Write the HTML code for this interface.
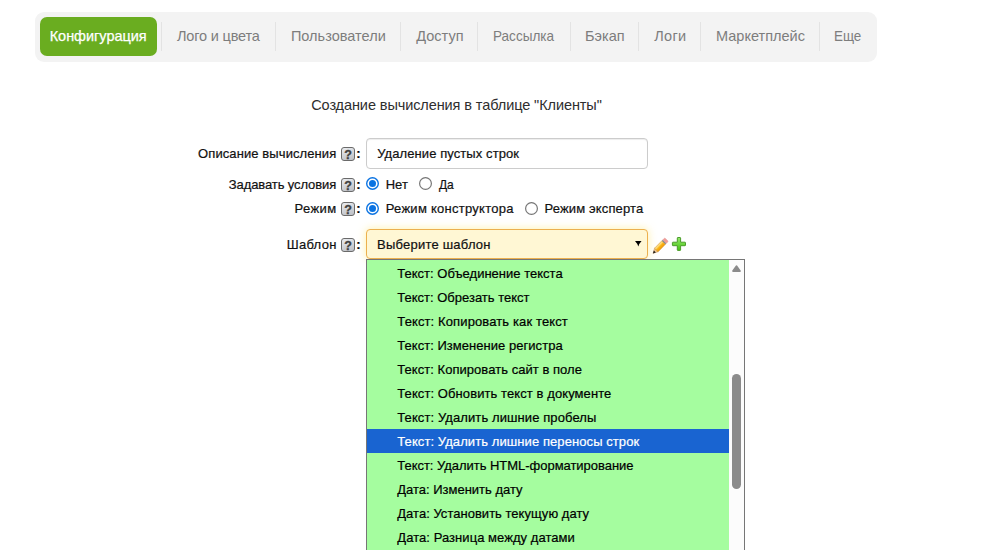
<!DOCTYPE html>
<html lang="ru">
<head>
<meta charset="utf-8">
<title>Создание вычисления в таблице "Клиенты"</title>
<style>
html,body{margin:0;padding:0;background:#fff;}
body{width:997px;height:550px;overflow:hidden;position:relative;font-family:"Liberation Sans","DejaVu Sans",sans-serif;color:#222;}
.t{position:absolute;white-space:nowrap;font-size:14.5px;line-height:20px;height:20px;-webkit-text-stroke:0.2px currentColor;}
#nav{position:absolute;left:35px;top:12px;width:842px;height:50px;background:#f3f3f3;border-radius:9px;}
#act{position:absolute;left:40px;top:17px;width:117px;height:39px;background:#6aad20;border-radius:7px;}
.sep{position:absolute;top:22px;width:1px;height:29px;background:#e3e3e3;}
.q{position:absolute;left:341px;width:12px;height:12px;border:1px solid #6a6a6a;border-radius:3px;background:linear-gradient(160deg,#ebedf0,#cfd2d7 55%,#bcbfc5);font:bold 12.5px/14.4px "Liberation Sans",sans-serif;color:#404040;-webkit-text-stroke:0.3px #404040;text-align:center;overflow:visible;}
#inp{position:absolute;left:366px;top:138px;width:280px;height:29px;border:1px solid #ccc;border-radius:4px;background:#fff;box-shadow:inset 0 1px 1px rgba(0,0,0,.075);}
#sel{position:absolute;left:366px;top:229px;width:280px;height:28px;border:1px solid #ecb04e;border-radius:4px;background:#fff7d4;box-shadow:0 0 8px rgba(255,232,120,.65);}
#dd{position:absolute;left:366px;top:259px;width:377px;height:300px;border:1px solid #767676;background:#fcfcfc;}
#ddg{position:absolute;left:367px;top:260px;width:362px;height:290px;background:#a5fd9f;}
#hl{position:absolute;left:367px;top:429px;width:362px;height:24px;background:#1964d1;}
#thumb{position:absolute;left:732px;top:374px;width:9px;height:115px;border-radius:5px;background:#8b8b8b;}
svg{position:absolute;overflow:visible;}
</style>
</head>
<body>
<div id="nav"></div>
<div id="act"></div>
<div class="sep" style="left:161px"></div>
<div class="sep" style="left:275px"></div>
<div class="sep" style="left:400px"></div>
<div class="sep" style="left:477px"></div>
<div class="sep" style="left:570px"></div>
<div class="sep" style="left:638px"></div>
<div class="sep" style="left:700px"></div>
<div class="sep" style="left:819px"></div>
<div class="q" style="top:147px">?</div>
<div class="q" style="top:178px">?</div>
<div class="q" style="top:202px">?</div>
<div class="q" style="top:238px">?</div>
<div id="inp"></div>
<div id="sel"></div>
<div id="dd"></div>
<div id="ddg"></div>
<div id="hl"></div>
<div id="thumb"></div>
<svg style="left:366px;top:177px" width="13" height="13" viewBox="0 0 13 13"><circle cx="6.5" cy="6.5" r="5.8" fill="#fff" stroke="#0a73e2" stroke-width="1.4"/><circle cx="6.5" cy="6.5" r="3.5" fill="#0a73e2"/></svg>
<svg style="left:419px;top:177px" width="13" height="13" viewBox="0 0 13 13"><circle cx="6.5" cy="6.5" r="5.9" fill="#fff" stroke="#767676" stroke-width="1.2"/></svg>
<svg style="left:366px;top:202px" width="13" height="13" viewBox="0 0 13 13"><circle cx="6.5" cy="6.5" r="5.8" fill="#fff" stroke="#0a73e2" stroke-width="1.4"/><circle cx="6.5" cy="6.5" r="3.5" fill="#0a73e2"/></svg>
<svg style="left:525px;top:202px" width="13" height="13" viewBox="0 0 13 13"><circle cx="6.5" cy="6.5" r="5.9" fill="#fff" stroke="#767676" stroke-width="1.2"/></svg>
<svg style="left:634.7px;top:241px" width="6.6" height="5.6" viewBox="0 0 6.6 5.6"><path d="M0 0H6.6Q4.2 2.4 3.3 5.6Q2.4 2.4 0 0Z" fill="#000"/></svg>
<svg style="left:732px;top:265px" width="9" height="7" viewBox="0 0 9 7"><path d="M4.5 1.3L7.9 6H1.1Z" fill="#8b8b8b" stroke="#8b8b8b" stroke-width="1.9" stroke-linejoin="round"/></svg>
<svg style="left:0;top:0" width="997" height="550" viewBox="0 0 997 550">
<defs>
<linearGradient id="pg" x1="0" y1="0" x2="0" y2="1"><stop offset="0" stop-color="#fde596"/><stop offset="0.3" stop-color="#fdd466"/><stop offset="0.5" stop-color="#fbb515"/><stop offset="1" stop-color="#ee990a"/></linearGradient>
<linearGradient id="plg" x1="0" y1="0" x2="0" y2="1"><stop offset="0" stop-color="#93ea6c"/><stop offset="1" stop-color="#47c312"/></linearGradient>
</defs>
<g transform="translate(653.1,253.3) rotate(-45.6)">
<path d="M0 0L4.6 -2.5V2.5Z" fill="#efc58a" stroke="#c4925a" stroke-width="0.5"/>
<path d="M-0.3 0L2.5 -1.4V1.4Z" fill="#25211e"/>
<rect x="4.6" y="-2.5" width="10.4" height="5" fill="url(#pg)" stroke="#cf8a1e" stroke-width="0.5"/>
<rect x="15" y="-2.5" width="1.5" height="5" fill="#878c93"/>
<path d="M16.5 -2.5H18.3Q19.2 -2.5 19.2 -1.6V1.6Q19.2 2.5 18.3 2.5H16.5Z" fill="#f09b98" stroke="#dd8a88" stroke-width="0.4"/>
</g>
<path d="M677.8 237.5h2.3q0.5 0 0.5 0.5v4.2h4.4q0.5 0 0.5 0.5v2.5q0 0.5 -0.5 0.5h-4.4v4.2q0 0.5 -0.5 0.5h-2.3q-0.5 0 -0.5 -0.5v-4.2h-4.4q-0.5 0 -0.5 -0.5v-2.5q0 -0.5 0.5 -0.5h4.4v-4.2q0 -0.5 0.5 -0.5z" fill="url(#plg)" stroke="#4c9c2b" stroke-width="1"/>
</svg>
<div class="t" style="left:49.70px;top:26.0px;color:#fff;letter-spacing:-0.032px;font-size:14.5px;-webkit-text-stroke:0.25px #fff;">Конфигурация</div>
<div class="t" style="left:177.00px;top:26.0px;color:#7d7d7d;letter-spacing:-0.180px;font-size:14.5px;-webkit-text-stroke:0;">Лого и цвета</div>
<div class="t" style="left:290.90px;top:26.0px;color:#7d7d7d;letter-spacing:0.024px;font-size:14.5px;-webkit-text-stroke:0;">Пользователи</div>
<div class="t" style="left:416.20px;top:26.0px;color:#7d7d7d;letter-spacing:0.030px;font-size:14.5px;-webkit-text-stroke:0;">Доступ</div>
<div class="t" style="left:493.07px;top:26.0px;color:#7d7d7d;letter-spacing:0.000px;font-size:14.5px;-webkit-text-stroke:0;transform:scaleX(0.9342);transform-origin:0 0;">Рассылка</div>
<div class="t" style="left:585.00px;top:26.0px;color:#7d7d7d;letter-spacing:0.040px;font-size:14.5px;-webkit-text-stroke:0;">Бэкап</div>
<div class="t" style="left:654.30px;top:26.0px;color:#7d7d7d;letter-spacing:0.277px;font-size:14.5px;-webkit-text-stroke:0;">Логи</div>
<div class="t" style="left:716.00px;top:26.0px;color:#7d7d7d;letter-spacing:0.012px;font-size:14.5px;-webkit-text-stroke:0;">Маркетплейс</div>
<div class="t" style="left:834.48px;top:26.0px;color:#7d7d7d;letter-spacing:0.000px;font-size:14.5px;-webkit-text-stroke:0;transform:scaleX(0.9248);transform-origin:0 0;">Еще</div>
<div class="t" style="left:311.20px;top:95.0px;color:#2e2e2e;letter-spacing:-0.092px;font-size:14.5px;-webkit-text-stroke:0;">Создание вычисления в таблице &quot;Клиенты&quot;</div>
<div class="t" style="left:198.10px;top:143.5px;color:#111;letter-spacing:0.091px;font-size:13px;">Описание вычисления</div>
<div class="t" style="left:228.80px;top:174.5px;color:#111;letter-spacing:-0.102px;font-size:13px;">Задавать условия</div>
<div class="t" style="left:294.60px;top:198.5px;color:#111;letter-spacing:0.365px;font-size:13px;">Режим</div>
<div class="t" style="left:286.70px;top:234.5px;color:#111;letter-spacing:0.306px;font-size:13px;">Шаблон</div>
<div class="t" style="left:356.30px;top:143.5px;color:#000;letter-spacing:0.000px;font-size:13px;font-weight:bold;">:</div>
<div class="t" style="left:356.30px;top:174.5px;color:#000;letter-spacing:0.000px;font-size:13px;font-weight:bold;">:</div>
<div class="t" style="left:356.30px;top:198.5px;color:#000;letter-spacing:0.000px;font-size:13px;font-weight:bold;">:</div>
<div class="t" style="left:356.30px;top:234.5px;color:#000;letter-spacing:0.000px;font-size:13px;font-weight:bold;">:</div>
<div class="t" style="left:377.30px;top:143.5px;color:#111;letter-spacing:0.081px;font-size:13px;">Удаление пустых строк</div>
<div class="t" style="left:385.70px;top:174.5px;color:#111;letter-spacing:0.007px;font-size:13px;">Нет</div>
<div class="t" style="left:438.80px;top:174.5px;color:#111;letter-spacing:0.000px;font-size:13px;transform:scaleX(0.9224);transform-origin:0 0;">Да</div>
<div class="t" style="left:385.70px;top:198.5px;color:#111;letter-spacing:0.266px;font-size:13px;">Режим конструктора</div>
<div class="t" style="left:544.50px;top:198.5px;color:#111;letter-spacing:0.140px;font-size:13px;">Режим эксперта</div>
<div class="t" style="left:377.00px;top:234.5px;color:#111;letter-spacing:0.224px;font-size:13px;">Выберите шаблон</div>
<div class="t" style="left:397.30px;top:263.5px;color:#000;letter-spacing:0.010px;font-size:13px;">Текст: Объединение текста</div>
<div class="t" style="left:397.30px;top:287.5px;color:#000;letter-spacing:-0.005px;font-size:13px;">Текст: Обрезать текст</div>
<div class="t" style="left:397.30px;top:311.5px;color:#000;letter-spacing:0.118px;font-size:13px;">Текст: Копировать как текст</div>
<div class="t" style="left:397.30px;top:335.5px;color:#000;letter-spacing:0.035px;font-size:13px;">Текст: Изменение регистра</div>
<div class="t" style="left:397.30px;top:359.5px;color:#000;letter-spacing:0.043px;font-size:13px;">Текст: Копировать сайт в поле</div>
<div class="t" style="left:397.30px;top:383.5px;color:#000;letter-spacing:0.086px;font-size:13px;">Текст: Обновить текст в документе</div>
<div class="t" style="left:397.30px;top:407.5px;color:#000;letter-spacing:0.099px;font-size:13px;">Текст: Удалить лишние пробелы</div>
<div class="t" style="left:397.30px;top:431.5px;color:#fff;letter-spacing:0.084px;font-size:13px;">Текст: Удалить лишние переносы строк</div>
<div class="t" style="left:397.30px;top:455.5px;color:#000;letter-spacing:-0.032px;font-size:13px;">Текст: Удалить HTML-форматирование</div>
<div class="t" style="left:397.30px;top:479.5px;color:#000;letter-spacing:-0.011px;font-size:13px;">Дата: Изменить дату</div>
<div class="t" style="left:397.30px;top:503.5px;color:#000;letter-spacing:0.023px;font-size:13px;">Дата: Установить текущую дату</div>
<div class="t" style="left:397.30px;top:527.5px;color:#000;letter-spacing:0.054px;font-size:13px;">Дата: Разница между датами</div>
</body>
</html>
